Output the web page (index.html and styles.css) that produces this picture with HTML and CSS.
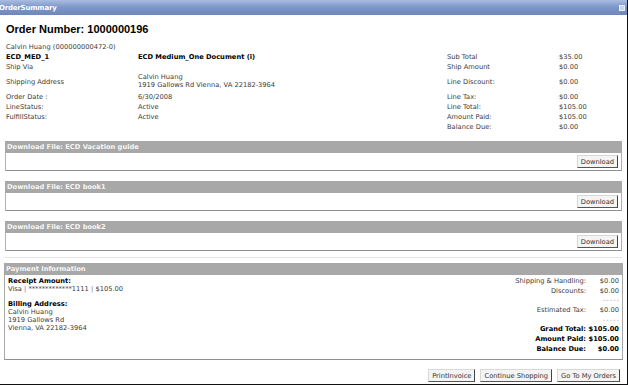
FILE: index.html
```html
<!DOCTYPE html>
<html lang="en">
<head>
    <meta charset="UTF-8">
    <title>Order Summary</title>
    <link rel="stylesheet" href="styles.css">
</head>
<body>
    <div class="window">
        <!-- Window title bar -->
        <div class="titlebar">
            <span class="title">OrderSummary</span>
            <span class="tb-btn"></span>
        </div>

        <div class="content">
            <h1 class="order-no">Order Number: 1000000196</h1>
            <div class="customer">Calvin Huang (000000000472-0)</div>

            <!-- Line item summary -->
            <div class="summary">
                <div class="b">ECD_MED_1</div>
                <div class="b">ECD Medium_One Document (i)</div>
                <div>Sub Total</div>
                <div>$35.00</div>

                <div>Ship Via</div>
                <div></div>
                <div>Ship Amount</div>
                <div>$0.00</div>

                <div>Shipping Address</div>
                <div class="address">Calvin Huang<br>1919 Gallows Rd Vienna, VA 22182-3964</div>
                <div>Line Discount:</div>
                <div>$0.00</div>

                <div>Order Date :</div>
                <div>6/30/2008</div>
                <div>Line Tax:</div>
                <div>$0.00</div>

                <div>LineStatus:</div>
                <div>Active</div>
                <div>Line Total:</div>
                <div>$105.00</div>

                <div>FulfillStatus:</div>
                <div>Active</div>
                <div>Amount Paid:</div>
                <div>$105.00</div>

                <div></div>
                <div></div>
                <div>Balance Due:</div>
                <div>$0.00</div>
            </div>

            <!-- Download files -->
            <div class="panel">
                <div class="panel-head">Download File: ECD Vacation guide</div>
                <div class="panel-body"><button class="btn">Download</button></div>
            </div>
            <div class="panel">
                <div class="panel-head">Download File: ECD book1</div>
                <div class="panel-body"><button class="btn">Download</button></div>
            </div>
            <div class="panel">
                <div class="panel-head">Download File: ECD book2</div>
                <div class="panel-body"><button class="btn">Download</button></div>
            </div>

            <div class="divider"></div>

            <!-- Payment information -->
            <div class="panel payment">
                <div class="panel-head">Payment Information</div>
                <div class="payment-body">
                    <div class="billing">
                        <div class="b">Receipt Amount:</div>
                        <div>Visa <span class="sep">|</span> *************1111 <span class="sep">|</span> $105.00</div>
                        <div class="b gap">Billing Address:</div>
                        <div>Calvin Huang</div>
                        <div>1919 Gallows Rd</div>
                        <div>Vienna, VA 22182-3964</div>
                    </div>
                    <div class="totals">
                        <div class="lbl">Shipping &amp; Handling:</div><div class="val">$0.00</div>
                        <div class="lbl">Discounts:</div><div class="val">$0.00</div>
                        <div class="lbl"></div><div class="val dash">-----</div>
                        <div class="lbl">Estimated Tax:</div><div class="val">$0.00</div>
                        <div class="lbl"></div><div class="val dash">-----</div>
                        <div class="lbl b">Grand Total:</div><div class="val b">$105.00</div>
                        <div class="lbl b">Amount Paid:</div><div class="val b">$105.00</div>
                        <div class="lbl b">Balance Due:</div><div class="val b">$0.00</div>
                    </div>
                </div>
            </div>

            <div class="actions">
                <button class="btn">PrintInvoice</button>
                <button class="btn">Continue Shopping</button>
                <button class="btn">Go To My Orders</button>
            </div>
        </div>
    </div>
</body>
</html>
```

FILE: styles.css
```css
/* Page */
body {
    margin: 0;
    font-family: "DejaVu Sans", Verdana, sans-serif;
    font-size: 6.7px;
    color: #3a3a3a;
    background: #fff;
}

.window {
    width: 627px;
    height: 384px;
    border-right: 1px solid #111;
    border-bottom: 1px solid #111;
    overflow: hidden;
}

/* Title bar */
.titlebar {
    height: 15px;
    display: flex;
    align-items: center;
    justify-content: space-between;
    background: linear-gradient(#a9bde2, #7f98c9 45%, #6d87ba);
}

.title {
    color: #fff;
    font-weight: bold;
    font-size: 7px;
    margin-left: -1px;
    letter-spacing: -0.2px;
}

.tb-btn {
    width: 4px;
    height: 4px;
    margin-right: 2px;
    border: 1px solid #e8eef8;
    background: #c8d4ea;
}

.content {
    padding: 0 4px;
}

/* Header */
.order-no {
    margin: 8px 0 0 2px;
    font-family: "Liberation Sans", Arial, sans-serif;
    font-size: 11px;
    line-height: 13px;
    color: #000;
}

.customer {
    margin: 6px 0 0 2px;
    line-height: 10px;
}

.b {
    font-weight: bold;
    color: #000;
}

/* Line item summary grid */
.summary {
    display: grid;
    grid-template-columns: 132px 309px 112px auto;
    grid-auto-rows: minmax(10px, auto);
    align-items: center;
    margin-left: 2px;
    line-height: 10px;
}

.summary .address {
    line-height: 8px;
    padding: 1px 0 3px;
}

/* Download panels */
.panel {
    margin: 9px 1px 10px 1px;
}

.panel + .panel {
    margin-top: 0;
}

.panel-head {
    height: 12px;
    line-height: 12px;
    padding-left: 2px;
    background: #a8a8a8;
    color: #f6f6f6;
    font-weight: bold;
    font-size: 6.7px;
}

.panel-body {
    height: 17px;
    display: flex;
    justify-content: flex-end;
    align-items: center;
    padding-right: 3px;
    border: 1px solid #b0b0b0;
    border-top: none;
    border-bottom-color: #909090;
}

.btn {
    height: 13px;
    padding: 0 3px;
    font-family: "DejaVu Sans", Verdana, sans-serif;
    font-size: 6.7px;
    color: #333;
    background: #f4f4f4;
    border: 1px solid;
    border-color: #d8d8d8 #444 #555 #d8d8d8;
    border-radius: 0;
}

.divider {
    margin: -4px 1px 0;
    border-top: 1px solid #e4e4e4;
}

/* Payment panel */
.payment {
    margin: 5px 0 0 0;
}

.payment-body {
    height: 84px;
    display: flex;
    justify-content: space-between;
    border: 1px solid #a8a8a8;
    border-top: none;
    border-bottom-color: #909090;
}

.billing {
    padding: 2px 3px;
    line-height: 8px;
}

.billing .gap {
    margin-top: 7px;
}

.sep {
    color: #8a6fb0;
}

.totals {
    display: grid;
    grid-template-columns: auto 32px;
    grid-auto-rows: 9.7px;
    align-items: center;
    padding: 1px 3px 0 0;
    text-align: right;
}

.totals .lbl {
    padding-right: 1px;
}

.totals .dash {
    color: #a0a0a0;
    letter-spacing: 1px;
    margin-right: -1px;
}

/* Bottom actions */
.actions {
    display: flex;
    justify-content: flex-end;
    gap: 5px;
    margin: 9px 3px 0 0;
}
```
